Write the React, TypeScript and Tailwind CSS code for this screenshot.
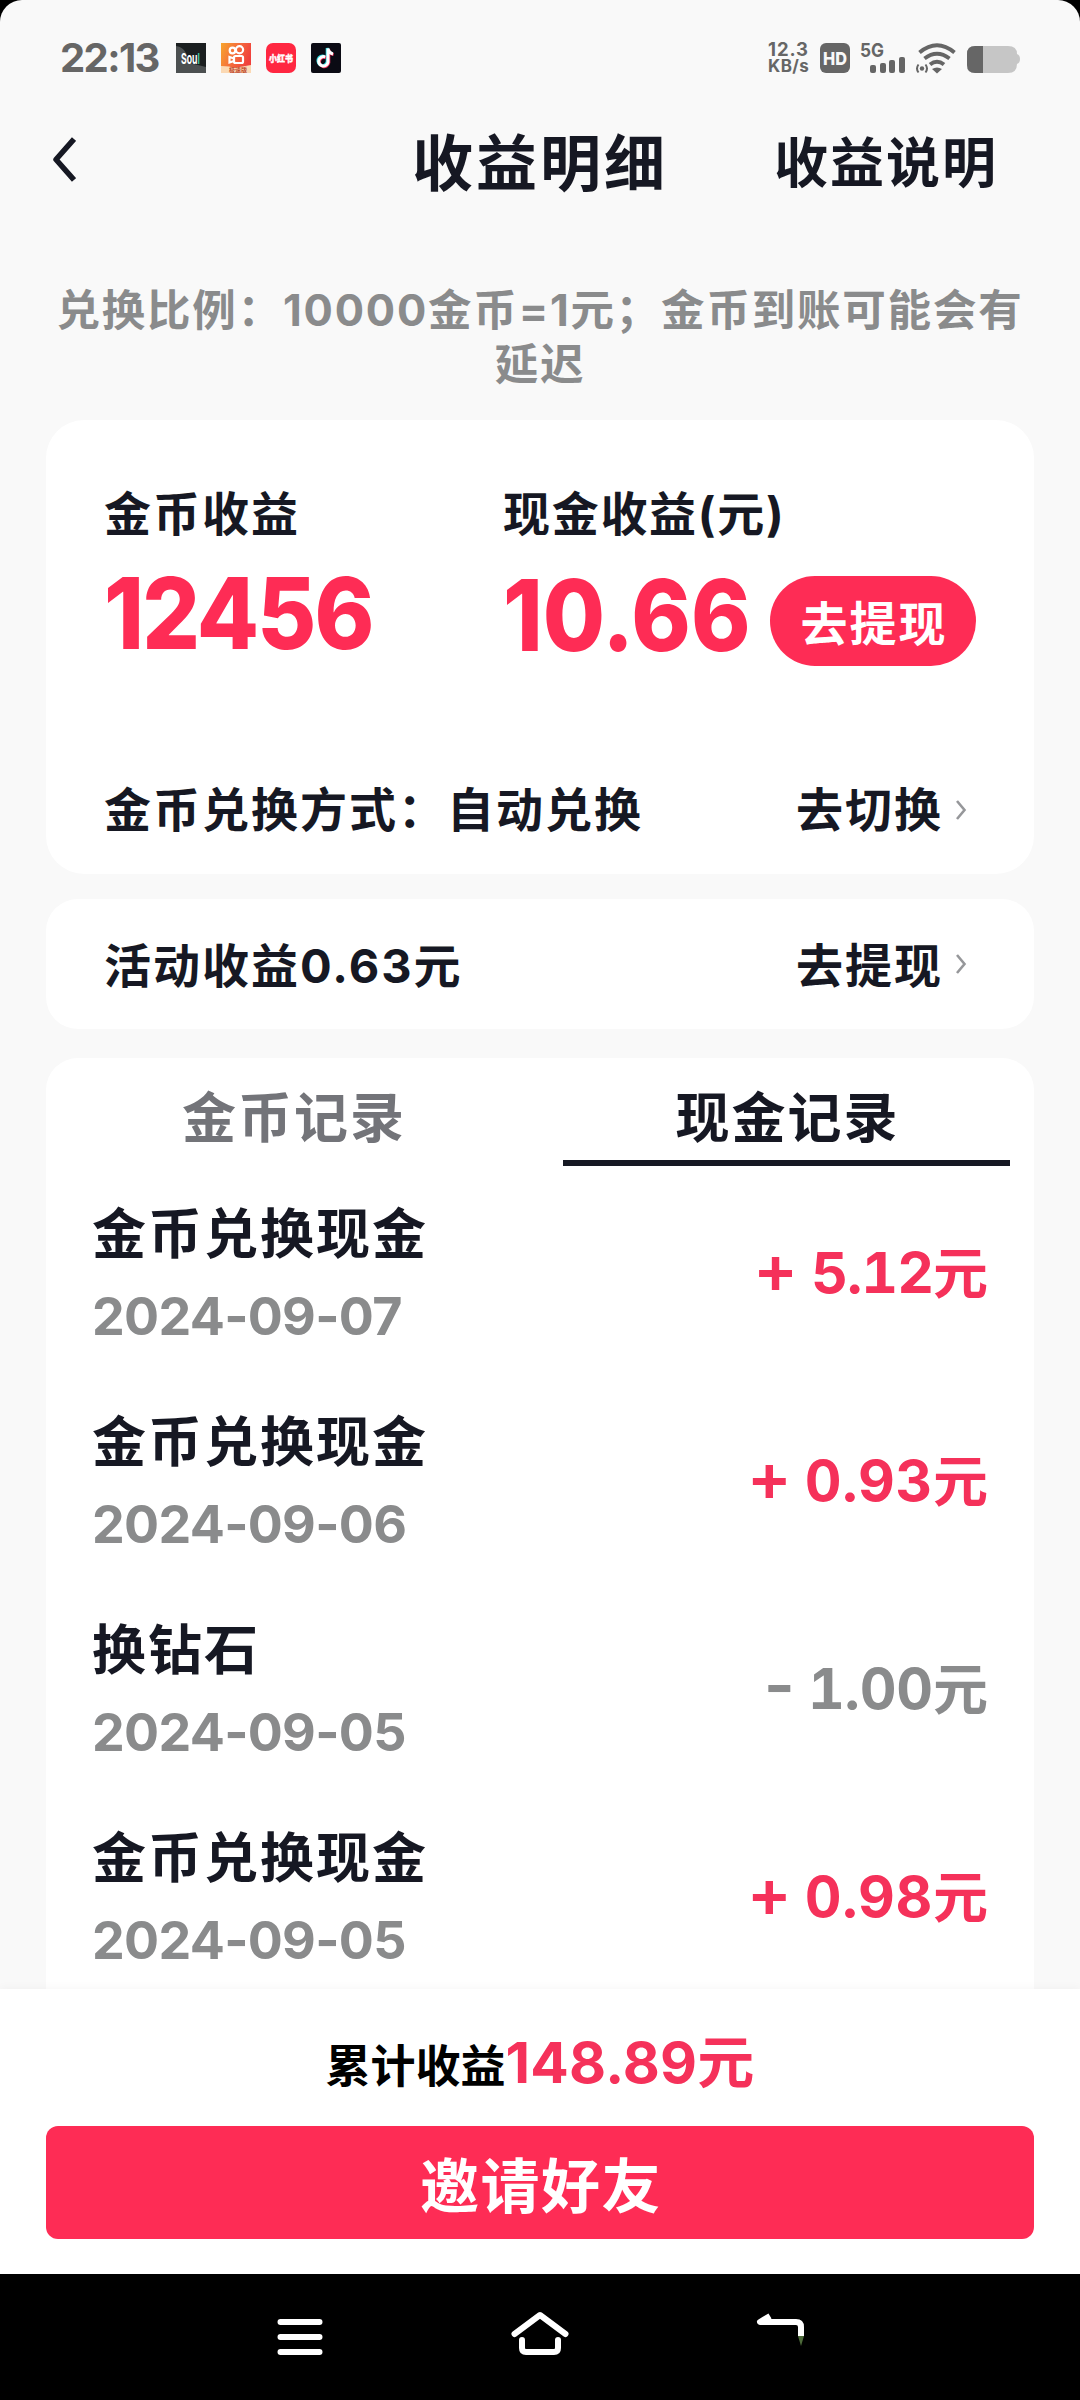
import React from 'react';

const records = [
  { title: '金币兑换现金', date: '2024-09-07', sign: '+', amount: '5.12', tone: 'text-[#f5315a]', tracking: 'tracking-[-1px]' },
  { title: '金币兑换现金', date: '2024-09-06', sign: '+', amount: '0.93', tone: 'text-[#f5315a]', tracking: 'tracking-[0.600px]' },
  { title: '换钻石', date: '2024-09-05', sign: '-', amount: '1.00', tone: 'text-[#8a8b8c]', tracking: 'tracking-[-0.200px]' },
  { title: '金币兑换现金', date: '2024-09-05', sign: '+', amount: '0.98', tone: 'text-[#f5315a]', tracking: 'tracking-[0.600px]' },
];

function StatusBar() {
  return (
    <header className="flex h-[116px] shrink-0 items-start pl-[60px] pr-[60px] text-[#666]">
      <div className="mt-[36px] w-[116px] text-[40px] font-bold leading-[44px] tracking-[-1.600px] whitespace-nowrap">22:13</div>
      <div className="mt-[43px] flex gap-[15px]">
        <svg width="30" height="30" viewBox="0 0 30 30">
          <rect width="30" height="30" fill="#1b1f20" />
          <path d="M0 3Q7 4 10 10L14 20L30 24V30H0Z" fill="#4c5051" />
          <text transform="translate(5 21) scale(0.58 1)" fontSize="15" fontWeight="700" fill="#fff">
            Sou<tspan fill="#3ec9a7">l</tspan>
          </text>
        </svg>
        <svg width="30" height="30" viewBox="0 0 30 30">
          <defs>
            <linearGradient id="ks" x1="0" y1="0" x2="1" y2="0.4">
              <stop offset="0" stopColor="#f7a52c" />
              <stop offset="0.5" stopColor="#f5703c" />
              <stop offset="1" stopColor="#f0403c" />
            </linearGradient>
          </defs>
          <rect width="30" height="30" fill="url(#ks)" />
          <path d="M0 23Q10 23 13 25L30 22V30H0Z" fill="#fbd9b4" />
          <g fill="none" stroke="#fff" strokeWidth="2.2">
            <circle cx="11.500" cy="7.500" r="2.800" />
            <circle cx="18.500" cy="6.800" r="3.600" />
            <rect x="13" y="13" width="9" height="7" rx="1.500" />
            <path d="M13 15.500L8.500 14V19.500L13 18" />
          </g>
          <text x="8" y="28.500" fontSize="6" fontWeight="700" fill="#c0482c">极速版</text>
        </svg>
        <svg width="30" height="30" viewBox="0 0 30 30">
          <rect width="30" height="30" rx="7" fill="#ff2741" />
          <text x="3" y="18.500" fontSize="9" fontWeight="900" fill="#fff" stroke="#fff" strokeWidth="0.400" textLength="24" lengthAdjust="spacingAndGlyphs">小红书</text>
        </svg>
        <svg width="30" height="30" viewBox="0 0 30 30">
          <rect width="30" height="30" rx="2" fill="#0b0b14" />
          <g fill="none" strokeWidth="3">
            <path d="M13.400 13.400A4.700 4.700 0 1 0 16.200 18.500V5Q17 9.400 21 10.400" stroke="#27d9e0" />
            <path d="M15 14.600A4.700 4.700 0 1 0 17.800 19.800V6.600Q18.400 10.600 22.600 11.600" stroke="#f3315a" />
            <path d="M14.200 14A4.700 4.700 0 1 0 17 19.200V5.600Q17.700 10 22 11" stroke="#fff" />
          </g>
        </svg>
      </div>
      <div className="ml-auto mt-[41px] flex items-start">
        <div className="w-[51px] text-[18.500px] font-bold leading-[17px] whitespace-nowrap">
          <div className="tracking-[0.900px]">12.3</div>
          <div className="text-[17px] tracking-[0.400px]">KB/s</div>
        </div>
        <svg className="mt-px" width="32" height="32" viewBox="0 0 32 32">
          <rect x="1" y="1" width="30" height="30" rx="6" fill="#666" />
          <text x="4" y="22.500" fontSize="18" fontWeight="800" fill="#f8f8f8" textLength="24" lengthAdjust="spacingAndGlyphs">HD</text>
        </svg>
        <svg className="-mt-[6px] ml-[8px]" width="48" height="40" viewBox="0 -6 48 40">
          <text x="1" y="16" fontSize="19" fontWeight="700" fill="#666" textLength="24" lengthAdjust="spacingAndGlyphs">5G</text>
          <g fill="#666">
            <rect x="11" y="24" width="6" height="8" rx="2" />
            <rect x="21" y="22" width="6" height="10" rx="2" />
            <rect x="30" y="19" width="6" height="13" rx="2" />
            <rect x="40" y="16" width="6" height="16" rx="2" />
          </g>
        </svg>
        <svg className="ml-[8px]" width="42" height="34" viewBox="0 0 42 34">
          <g fill="none" stroke="#666" strokeWidth="4">
            <path d="M4.500 11.500Q22 -3 39.500 11.500" />
            <path d="M9.500 17.500Q22 8 34.500 17.500" />
            <path d="M15 23.500Q22 18 29 23.500" />
          </g>
          <path d="M17 28Q22 25 27 28L22 32.500Z" fill="#666" />
          <circle cx="7" cy="27.500" r="2.200" fill="#666" />
          <path d="M3.500 23.500Q0.500 27.500 3.500 31.500M10.500 23.500Q13.500 27.500 10.500 31.500" fill="none" stroke="#666" strokeWidth="2" />
        </svg>
        <svg className="ml-[9px] mt-[4px]" width="54" height="28" viewBox="0 0 54 28">
          <path d="M9 1H42Q51 1 51 9Q54 10 54 14T51 19Q51 28 42 28H9Q1 28 1 20V9Q1 1 9 1Z" fill="#c6c6c6" />
          <path d="M17 1H9Q1 1 1 9V20Q1 28 9 28H17Z" fill="#666" />
        </svg>
      </div>
    </header>
  );
}

function Chevron() {
  return (
    <svg className="ml-[12px] mr-[4px]" width="12" height="20" viewBox="0 0 12 20">
      <path d="M2 1L9.500 10L2 19" fill="none" stroke="#96979a" strokeWidth="2.600" />
    </svg>
  );
}

export default function App() {
  return (
    <div className="h-[2400px] w-[1080px] overflow-hidden bg-black font-['Inter','Noto_Sans_CJK_SC',sans-serif] font-bold text-[#161823]">
      <div className="flex h-[2274px] flex-col overflow-hidden rounded-t-[22px] bg-[#f9f9f9]">
        <StatusBar />
        <nav className="relative flex h-[92px] shrink-0 items-center justify-end pr-[82px]">
          <svg className="absolute left-[52px] top-[20px]" width="24" height="48" viewBox="0 0 24 48">
            <path d="M22 3L4 23.500L22 44" fill="none" stroke="#161823" strokeWidth="5.500" strokeLinejoin="round" />
          </svg>
          <h1 className="absolute inset-x-0 pt-[3px] text-center text-[61px] leading-[92px] tracking-[3px]">收益明细</h1>
          <button className="relative pt-[3px] text-[54px] leading-[92px] tracking-[2px]">收益说明</button>
        </nav>
        <p className="mt-[75px] h-[137px] shrink-0 text-center text-[43.500px] leading-[54px] tracking-[1.800px] text-[#8a8b8c]">
          <span className="whitespace-nowrap">兑换比例：10000金币=1元；金币到账可能会有</span>
          <br />
          延迟
        </p>

        <main className="flex min-h-0 grow flex-col px-[46px]">
          <section className="flex h-[454px] shrink-0 flex-col rounded-[38px] bg-white px-[58px] pt-[61px] text-[47px]">
            <div className="flex h-[190px]">
              <div className="w-[399px]">
                <div className="leading-[66px] tracking-[2px]">金币收益</div>
                <div className="mt-[16px] origin-left scale-x-[0.915] text-[99px] font-extrabold leading-[100px] tracking-[-2px] text-[#fe2c55]">12456</div>
              </div>
              <div className="whitespace-nowrap">
                <div className="leading-[66px] tracking-[1.700px]">现金收益(元)</div>
                <div className="mt-[16px] flex items-center">
                  <div className="w-[267px]">
                    <div className="origin-left scale-x-[0.91] text-[99px] font-extrabold leading-[100px] text-[#fe2c55]">10.66</div>
                  </div>
                  <button className="mt-[13px] h-[90px] w-[206px] shrink-0 rounded-full bg-[#fe2c55] pl-[2px] pt-[6px] text-[47px] leading-[84px] tracking-[2px] text-white">去提现</button>
                </div>
              </div>
            </div>
            <div className="mt-[106px] flex items-center leading-[66px]">
              <span className="grow tracking-[2px]">金币兑换方式：自动兑换</span>
              <span className="tracking-[2px]">去切换</span>
              <Chevron />
              <span className="w-[5px]" />
            </div>
          </section>

          <section className="mt-[25px] flex h-[130px] shrink-0 items-center rounded-[32px] bg-white pl-[58px] pr-[63px] text-[47px]">
            <span className="grow pt-[4px] tracking-[2px]">活动收益0.63元</span>
            <span className="pt-[4px] tracking-[2px]">去提现</span>
            <Chevron />
          </section>

          <section className="mt-[29px] min-h-0 grow overflow-hidden rounded-t-[32px] bg-white px-[24px]">
            <div className="flex h-[108px] justify-between text-center text-[54px] leading-[122px] tracking-[2px]">
              <div className="w-[448px] text-[#737479]">金币记录</div>
              <div className="h-[108px] w-[447px] border-b-[6px] border-[#161823] pl-[2px]">现金记录</div>
            </div>
            <ul className="px-[22px] pt-[23px]">
              {records.map((r, i) => (
                <li key={i} className="flex h-[208px] justify-between">
                  <div className="pt-[8px]">
                    <div className="text-[54px] leading-[76px] tracking-[2px]">{r.title}</div>
                    <div className="mt-[8px] text-[52px] leading-[71px] tracking-[-0.700px] text-[#8a8b8c]">{r.date}</div>
                  </div>
                  <div className={`flex items-baseline pt-[42px] text-[57px] leading-[76px] ${r.tone}`}>
                    <span className="mr-[13px] text-[67px] font-semibold leading-[76px]">{r.sign}</span>
                    <span className={`tabular-nums ${r.tracking}`}>{r.amount}</span>
                    <span className="text-[55px]">元</span>
                  </div>
                </li>
              ))}
            </ul>
          </section>
        </main>

        <footer className="h-[285px] shrink-0 bg-white px-[46px] pt-[32px] shadow-[0_-2px_8px_rgba(0,0,0,0.03)]">
          <div className="flex h-[84px] items-baseline justify-center leading-[84px]">
            <span className="text-[45px] text-black">累计收益</span>
            <span className="text-[57px] tracking-[0.200px] text-[#f5315a]">148.89元</span>
          </div>
          <button className="mt-[21px] block h-[113px] w-full rounded-[12px] bg-[#fe2c55] pl-[2px] text-[59px] leading-[121px] tracking-[1.500px] text-white">邀请好友</button>
        </footer>
      </div>

      <div className="flex h-[126px] items-start justify-between bg-black pl-[276px] pr-[272px] pt-[36px]">
        <svg width="48" height="52" viewBox="0 0 48 52">
          <path d="M4.500 12H43.500M4.500 27H43.500M4.500 42H43.500" stroke="#fff" strokeWidth="6" strokeLinecap="round" />
        </svg>
        <svg width="60" height="52" viewBox="0 0 60 52">
          <path d="M4.500 24L30 5L55.500 24M12 30V38Q12 42 16 42H44Q48 42 48 38V30" fill="none" stroke="#fff" strokeWidth="6" strokeLinecap="round" strokeLinejoin="round" />
        </svg>
        <svg width="52" height="52" viewBox="0 0 52 52">
          <path d="M14 6L4 12H40Q45 12 45 17V26" fill="none" stroke="#fff" strokeWidth="6" strokeLinejoin="round" />
          <path d="M42 26H48L45 36Z" fill="#4d6b3a" />
        </svg>
      </div>
    </div>
  );
}
